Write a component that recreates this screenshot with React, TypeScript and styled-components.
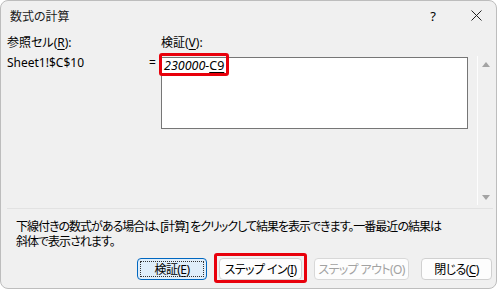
import * as React from 'react'
import styled, { createGlobalStyle } from 'styled-components'

const GlobalStyle = createGlobalStyle`
  html, body {
    margin: 0;
    padding: 0;
    background: #ffffff;
  }
  body {
    font-family: "Noto Sans", "Noto Sans CJK JP", sans-serif;
    font-feature-settings: "palt";
    color: #000;
  }
`

export default function App() {
  return (
    <>
      <GlobalStyle />
      <Window>
        <TitleBar>
          <TitleText>数式の計算</TitleText>
          <HelpButton>?</HelpButton>
          <CloseButton>
            <svg width="11" height="11" viewBox="0 0 11 11">
              <path d="M0.5 0.5 L10.5 10.5 M10.5 0.5 L0.5 10.5" stroke="#222" strokeWidth="1" />
            </svg>
          </CloseButton>
        </TitleBar>
        <Main>
          <LeftCol>
            <Label>参照セル(<u>R</u>):</Label>
            <CellRef>Sheet1!$C$10</CellRef>
          </LeftCol>
          <EqCol>=</EqCol>
          <RightCol>
            <Label>検証(<u>V</u>):</Label>
            <FormulaBox>
              <Marked>
                <Italic>230000-</Italic>
                <Underlined>C9</Underlined>
              </Marked>
            </FormulaBox>
          </RightCol>
          <ScrollTrack>
            <Arrow up />
            <Arrow />
          </ScrollTrack>
        </Main>
        <Separator />
        <Description>
          <DescLine>下線付きの数式がある場合は、[計算] をクリックして結果を表示できます。一番最近の結果は</DescLine>
          <DescLine>斜体で表示されます。</DescLine>
        </Description>
        <ButtonRow>
          <Button width={70} focused>
            検証(<u>E</u>)
          </Button>
          <Marked as="span">
            <Button width={83}>
              ステップ イン(<u>I</u>)
            </Button>
          </Marked>
          <Button width={95} disabled>
            ステップ アウト(O)
          </Button>
          <Button width={71}>
            閉じる(<u>C</u>)
          </Button>
        </ButtonRow>
      </Window>
    </>
  )
}

const Window = styled.div`
  width: 497px;
  height: 289px;
  box-sizing: border-box;
  border: 1px solid #bdbdbd;
  border-radius: 8px;
  background: #f0f0f0;
  display: flex;
  flex-direction: column;
  overflow: hidden;
  font-size: 12px;
`
const TitleBar = styled.div`
  height: 29px;
  display: flex;
  align-items: center;
  padding-left: 9px;
`
const TitleText = styled.div`
  flex: 1;
  font-size: 12px;
  color: #1a1a1a;
`
const HelpButton = styled.div`
  width: 36px;
  margin-right: 6px;
  text-align: center;
  font-size: 13px;
`
const CloseButton = styled.div`
  width: 39px;
  display: flex;
  justify-content: center;
  align-items: center;
`
const Main = styled.div`
  height: 175px;
  box-sizing: border-box;
  display: flex;
  padding: 6px 0 0 6px;
`
const LeftCol = styled.div`
  width: 142px;
  display: flex;
  flex-direction: column;
  gap: 6px;
`
const Label = styled.div`
  line-height: 14px;
  & > u {
    text-underline-offset: 2px;
  }
`
const CellRef = styled.div`
  line-height: 14px;
`
const EqCol = styled.div`
  width: 12px;
  padding-top: 20px;
  line-height: 14px;
`
const RightCol = styled.div`
  width: 307px;
  display: flex;
  flex-direction: column;
  gap: 7px;
`
const FormulaBox = styled.div`
  height: 72px;
  box-sizing: border-box;
  border: 1px solid #767676;
  background: #ffffff;
  padding: 0 0 0 2px;
  line-height: 15px;
  font-size: 12.5px;
`
const Marked = styled.span`
  position: relative;
  display: inline-block;
  &::after {
    content: '';
    position: absolute;
    top: -5px;
    bottom: -3px;
    left: -5px;
    right: -5px;
    border: 3px solid #e8000b;
    border-radius: 3px;
    pointer-events: none;
  }
`
const Italic = styled.span`
  font-style: italic;
`
const Underlined = styled.span`
  text-decoration: underline;
  text-underline-offset: 2px;
`
const ScrollTrack = styled.div`
  margin: 20px 0 0 9px;
  width: 16px;
  height: 149px;
  box-sizing: border-box;
  border-left: 1px solid #fdfdfd;
  display: flex;
  flex-direction: column;
  justify-content: space-between;
  align-items: center;
  padding: 6px 0 5px;
`
const Arrow = styled.div<{ up?: boolean }>`
  width: 0;
  height: 0;
  border-left: 4px solid transparent;
  border-right: 4px solid transparent;
  ${({ up }) => (up ? 'border-bottom: 5px solid #a3a3a3;' : 'border-top: 5px solid #a3a3a3;')}
`
const Separator = styled.div`
  height: 1px;
  margin: 3px 3px 0 6px;
  background: #e2e2e2;
`
const Description = styled.div`
  margin-top: 10px;
  padding-left: 15px;
  display: flex;
  flex-direction: column;
`
const DescLine = styled.div`
  height: 15px;
  line-height: 15px;
  font-size: 12px;
  letter-spacing: -1px;
  white-space: nowrap;
`
const ButtonRow = styled.div`
  margin-top: 9px;
  display: flex;
  justify-content: flex-end;
  gap: 12px;
  padding-right: 4px;
`
const Button = styled.button<{ width: number; focused?: boolean }>`
  position: relative;
  width: ${({ width }) => width}px;
  height: 22px;
  box-sizing: border-box;
  padding: 0;
  font-family: inherit;
  font-feature-settings: "palt";
  font-size: 12px;
  letter-spacing: -0.6px;
  white-space: nowrap;
  color: ${({ disabled }) => (disabled ? '#a2a2a2' : '#000')};
  background: ${({ focused }) => (focused ? '#e0eefa' : '#fdfdfd')};
  border: 1px solid ${({ focused, disabled }) => (focused ? '#0067c0' : disabled ? '#d8d8d8' : '#d0d0d0')};
  border-radius: 4px;
  display: block;
  & > u {
    text-underline-offset: 2px;
  }
  ${({ focused }) =>
    focused
      ? `&::before {
    content: '';
    position: absolute;
    inset: 2px;
    border: 1px dotted #333;
  }`
      : ''}
`
